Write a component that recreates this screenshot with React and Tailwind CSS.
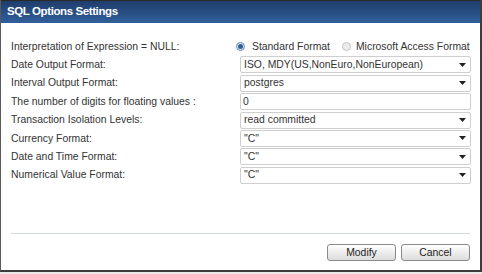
import React, { useState } from 'react';

const rows = [
  { label: 'Date Output Format:', type: 'select', value: 'ISO, MDY(US,NonEuro,NonEuropean)' },
  { label: 'Interval Output Format:', type: 'select', value: 'postgres' },
  { label: 'The number of digits for floating values :', type: 'input', value: '0' },
  { label: 'Transaction Isolation Levels:', type: 'select', value: 'read committed' },
  { label: 'Currency Format:', type: 'select', value: '"C"' },
  { label: 'Date and Time Format:', type: 'select', value: '"C"' },
  { label: 'Numerical Value Format:', type: 'select', value: '"C"' },
];

function Radio({ checked }) {
  return (
    <span
      className={`w-[9px] h-[9px] rounded-full border flex items-center justify-center shrink-0 ${
        checked ? 'border-[#6f8fb3] bg-[#dde8f4]' : 'border-[#c4c4c4] bg-[#ececec]'
      }`}
    >
      {checked && <span className="w-[5px] h-[5px] rounded-full bg-[#2f5f98]" />}
    </span>
  );
}

function SelectBox({ value }) {
  return (
    <div className="h-[17px] w-full border border-[#cfcfcf] rounded-[2px] bg-white flex items-center justify-between pl-[3px] pr-[4px]">
      <span className="truncate">{value}</span>
      <svg width="7" height="4" viewBox="0 0 7 4" className="shrink-0">
        <path d="M0 0H7L3.5 4Z" fill="#222" />
      </svg>
    </div>
  );
}

export default function App() {
  const [format, setFormat] = useState('standard');

  return (
    <div className="w-[482px] h-[274px] bg-[#e9e9e9] font-['Liberation_Sans',Arial,sans-serif] text-[10.4px] text-[#333]">
      <div className="w-[482px] h-[272px] bg-white border-l border-l-[#5a5a5a] border-r-2 border-r-[#3c3c3c] border-b-2 border-b-[#3c3c3c] flex flex-col">
        {/* Title bar */}
        <div className="h-[23px] border-t border-t-[#2a2a2a] bg-gradient-to-b from-[#1f3d6c] to-[#315f9b] flex items-center pl-[6px]">
          <span className="text-white font-bold text-[11.5px] tracking-[-0.4px]">SQL Options Settings</span>
        </div>

        {/* Form */}
        <div className="flex flex-col gap-[1.4px] pt-[15px] pl-[10px] pr-[9px] whitespace-nowrap">
          <div className="h-[17px] flex items-center">
            <span className="w-[225px] shrink-0">Interpretation of Expression = NULL:</span>
            <button
              type="button"
              onClick={() => setFormat('standard')}
              className="flex items-center gap-[7px]"
            >
              <Radio checked={format === 'standard'} />
              <span>Standard Format</span>
            </button>
            <button
              type="button"
              onClick={() => setFormat('access')}
              className="flex items-center gap-[5px] ml-[12px]"
            >
              <Radio checked={format === 'access'} />
              <span>Microsoft Access Format</span>
            </button>
          </div>
          {rows.map((row) => (
            <div key={row.label} className="h-[17px] flex items-center">
              <span className="w-[229px] shrink-0">{row.label}</span>
              <div className="flex-1">
                {row.type === 'select' ? (
                  <SelectBox value={row.value} />
                ) : (
                  <div className="h-[17px] w-full border border-[#cfcfcf] rounded-[2px] bg-white flex items-center pl-[2px]">
                    {row.value}
                  </div>
                )}
              </div>
            </div>
          ))}
        </div>

        {/* Footer */}
        <div className="mt-auto px-[10px] pb-[9px]">
          <div className="h-px bg-[#d3dbe2]" />
          <div className="flex justify-end gap-[5px] pt-[10px]">
            <button className="w-[69px] h-[17px] rounded-[3px] border border-[#8a8a8a] bg-gradient-to-b from-white to-[#dcdcdc] text-[#222]">
              Modify
            </button>
            <button className="w-[69px] h-[17px] rounded-[3px] border border-[#8a8a8a] bg-gradient-to-b from-white to-[#dcdcdc] text-[#222]">
              Cancel
            </button>
          </div>
        </div>
      </div>
    </div>
  );
}
